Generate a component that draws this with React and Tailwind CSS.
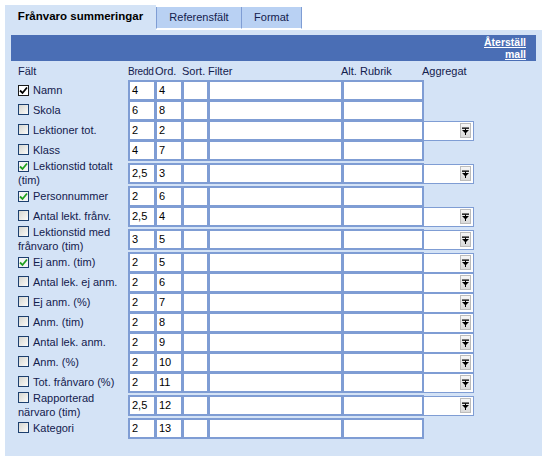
import React from 'react';

const rows = [
  { label: 'Namn', bredd: '4', ord: '4', check: 'black' },
  { label: 'Skola', bredd: '6', ord: '8' },
  { label: 'Lektioner tot.', bredd: '2', ord: '2', agg: true },
  { label: 'Klass', bredd: '4', ord: '7' },
  { label: 'Lektionstid totalt (tim)', bredd: '2,5', ord: '3', check: 'green', agg: true },
  { label: 'Personnummer', bredd: '2', ord: '6', check: 'green' },
  { label: 'Antal lekt. frånv.', bredd: '2,5', ord: '4', agg: true },
  { label: 'Lektionstid med frånvaro (tim)', bredd: '3', ord: '5', agg: true },
  { label: 'Ej anm. (tim)', bredd: '2', ord: '5', check: 'green', agg: true },
  { label: 'Antal lek. ej anm.', bredd: '2', ord: '6', agg: true },
  { label: 'Ej anm. (%)', bredd: '2', ord: '7', agg: true },
  { label: 'Anm. (tim)', bredd: '2', ord: '8', agg: true },
  { label: 'Antal lek. anm.', bredd: '2', ord: '9', agg: true },
  { label: 'Anm. (%)', bredd: '2', ord: '10', agg: true },
  { label: 'Tot. frånvaro (%)', bredd: '2', ord: '11', agg: true },
  { label: 'Rapporterad närvaro (tim)', bredd: '2,5', ord: '12', agg: true },
  { label: 'Kategori', bredd: '2', ord: '13' },
];

const CheckBox = ({ kind }) => {
  if (kind === 'black') {
    return (
      <span className="inline-flex align-[-1px] mr-[4px] w-[11px] h-[11px] border border-[#1a1a1a] bg-white items-center justify-center">
        <svg width="9" height="9" viewBox="0 0 9 9">
          <path d="M1 4.5 L3.5 7 L8 1.5" stroke="#000" strokeWidth="1.8" fill="none" />
        </svg>
      </span>
    );
  }
  if (kind === 'green') {
    return (
      <span className="inline-flex align-[-1px] mr-[4px] w-[11px] h-[11px] border border-[#1c3f6e] bg-[#f4f4f4] items-center justify-center">
        <svg width="9" height="9" viewBox="0 0 9 9">
          <path d="M1 4.5 L3.5 7 L8 1.5" stroke="#21a121" strokeWidth="1.8" fill="none" />
        </svg>
      </span>
    );
  }
  return (
    <span className="inline-block align-[-1px] mr-[4px] w-[11px] h-[11px] border border-[#1c3f6e] bg-gradient-to-br from-[#d6d6d0] to-[#fbfbfa]" />
  );
};

const Box = ({ w, value, first }) => (
  <div className={`${w} h-[21px] border-2 border-[#7f9dd4] bg-white pl-[2px] flex items-center text-black ${first ? '' : '-ml-px'}`}>
    {value}
  </div>
);

const Select = () => (
  <div className="w-[51px] h-[20px] -ml-px border border-[#7f9dd4] bg-white flex items-center justify-end pr-[2px]">
    <div className="w-[11px] h-[15px] border border-[#bcbcbc] bg-gradient-to-b from-[#f6f6f6] to-[#dadada] flex items-center justify-center">
      <svg width="7" height="8" viewBox="0 0 7 8">
        <rect x="0" y="0.5" width="7" height="1.3" fill="#000" />
        <path d="M0 3 L7 3 L3.5 6.5 Z" fill="#000" />
        <rect x="3" y="1.5" width="1" height="6.5" fill="#000" />
      </svg>
    </div>
  </div>
);

const App = () => {
  return (
    <div className="w-[550px] h-[462px] bg-white pt-[5px] pl-[5px] text-[11px] text-[#13204d]" style={{ fontFamily: '"Liberation Sans", Arial, sans-serif' }}>
      {/* Tabs */}
      <div className="flex items-end h-[25px]">
        <div className="w-[151px] h-[25px] bg-[#d4e3f6] font-bold flex items-center justify-center pb-[1px] text-black text-[11.5px]">
          Frånvaro summeringar
        </div>
        <div className="w-[86px] h-[22px] bg-[#b9d1f3] border-x border-[#7f9dd4] border-b border-b-white flex items-center justify-center mb-[1px]">
          Referensfält
        </div>
        <div className="w-[60px] h-[22px] bg-[#b9d1f3] border-r border-[#7f9dd4] border-b border-b-white flex items-center justify-center mb-[1px]">
          Format
        </div>
      </div>

      {/* Panel */}
      <div className="w-[537px] h-[426px] bg-[#d4e3f6] px-[6px] pt-[5px]">
        <div className="h-[26px] bg-[#4a6eb5] flex justify-end pr-[10px] pt-[1px]">
          <a href="#" className="text-white underline text-right leading-[12px] font-bold text-[10.5px]">
            Återställ<br />mall
          </a>
        </div>

        <div className="pl-[7px]">
          {/* Header */}
          <div className="flex items-end h-[20px] pb-[3px] leading-[13px]">
            <div className="w-[110px]">Fält</div>
            <div className="w-[27px] text-[10px] tracking-[-0.2px]">Bredd</div>
            <div className="w-[27px]">Ord.</div>
            <div className="w-[26px]">Sort.</div>
            <div className="w-[133px]">Filter</div>
            <div className="w-[81px]">Alt. Rubrik</div>
            <div>Aggregat</div>
          </div>

          {rows.map((r) => (
            <div key={r.label} className="flex items-center min-h-[21px] -mt-px first:mt-0">
              <div className="w-[110px] pr-[2px] leading-[13.5px]">
                <CheckBox kind={r.check} />
                {r.label}
              </div>
              <Box w="w-[28px]" value={r.bredd} first />
              <Box w="w-[28px]" value={r.ord} />
              <Box w="w-[27px]" />
              <Box w="w-[135px]" />
              <Box w="w-[82px]" />
              {r.agg && <Select />}
            </div>
          ))}
        </div>
      </div>
    </div>
  );
};

export default App;
